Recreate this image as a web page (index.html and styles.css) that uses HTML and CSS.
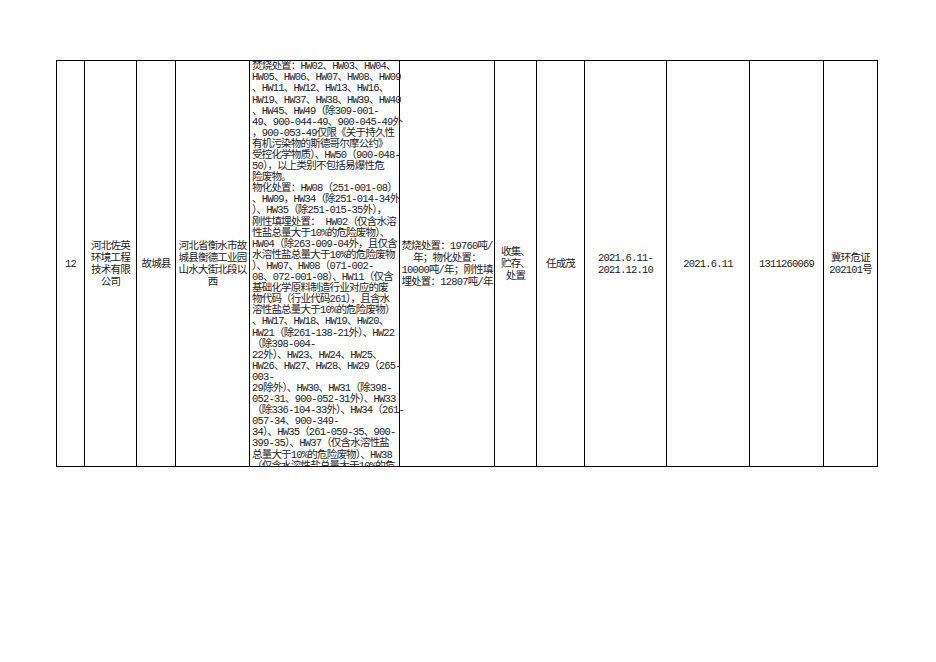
FILE: index.html
```html
<!DOCTYPE html>
<html lang="zh-CN">
<head>
<meta charset="utf-8">
<title>危险废物经营许可证</title>
<link rel="stylesheet" href="styles.css">
</head>
<body>
<div class="page">
<table class="sheet">
<colgroup>
<col class="c-no"><col class="c-name"><col class="c-county"><col class="c-addr"><col class="c-scope"><col class="c-scale"><col class="c-mode"><col class="c-person"><col class="c-valid"><col class="c-date"><col class="c-code"><col class="c-cert">
</colgroup>
<tr>
<td class="cell">12</td>
<td class="cell">河北佐英<br>环境工程<br>技术有限<br>公司</td>
<td class="cell">故城县</td>
<td class="cell">河北省衡水市故<br>城县衡德工业园<br>山水大街北段以<br>西</td>
<td class="scope"><div class="scope-box"><div class="scope-text">焚烧处置：HW02、HW03、HW04、<br>HW05、HW06、HW07、HW08、HW09<br>、HW11、HW12、HW13、HW16、<br>HW19、HW37、HW38、HW39、HW40<br>、HW45、HW49（除309-001-<br>49、900-044-49、900-045-49外<br>，900-053-49仅限《关于持久性<br>有机污染物的斯德哥尔摩公约》<br>受控化学物质）、HW50（900-048-<br>50），以上类别不包括易爆性危<br>险废物。<br>物化处置：HW08（251-001-08）<br>、HW09，HW34（除251-014-34外<br>）、HW35（除251-015-35外），<br>刚性填埋处置： HW02（仅含水溶<br>性盐总量大于10%的危险废物）、<br>HW04（除263-009-04外，且仅含<br>水溶性盐总量大于10%的危险废物<br>）、HW07、HW08（071-002-<br>08、072-001-08）、HW11（仅含<br>基础化学原料制造行业对应的废<br>物代码（行业代码261），且含水<br>溶性盐总量大于10%的危险废物）<br>、HW17、HW18、HW19、HW20、<br>HW21（除261-138-21外）、HW22<br>（除398-004-<br>22外）、HW23、HW24、HW25、<br>HW26、HW27、HW28、HW29（265-<br>003-<br>29除外）、HW30、HW31（除398-<br>052-31、900-052-31外）、HW33<br>（除336-104-33外）、HW34（261-<br>057-34、900-349-<br>34）、HW35（261-059-35、900-<br>399-35）、HW37（仅含水溶性盐<br>总量大于10%的危险废物）、HW38<br>（仅含水溶性盐总量大于10%的危</div></div></td>
<td class="cell">焚烧处置：19760吨/<br>年；物化处置：<br>10000吨/年；刚性填<br>埋处置：12807吨/年</td>
<td class="cell">收集、<br>贮存、<br>处置</td>
<td class="cell">任成茂</td>
<td class="cell">2021.6.11-<br>2021.12.10</td>
<td class="cell">2021.6.11</td>
<td class="cell">1311260069</td>
<td class="cell">冀环危证<br>202101号</td>
</tr>
</table>
</div>
</body>
</html>
```

FILE: styles.css
```css
html, body {
  margin: 0;
  padding: 0;
  background: #ffffff;
}

.page {
  padding: 60px 0 0 56px;
}

.sheet {
  border-collapse: collapse;
  table-layout: fixed;
  width: 822px;
  font-family: "Liberation Mono", "Noto Sans CJK SC", monospace;
  font-size: 10.5px;
  letter-spacing: -0.8px;
  color: #222222;
}

.sheet td {
  border: 1px solid #000;
  padding: 0;
  vertical-align: middle;
}

.c-no { width: 28px; }
.c-name { width: 52px; }
.c-county { width: 39px; }
.c-addr { width: 74px; }
.c-scope { width: 150px; }
.c-scale { width: 95px; }
.c-mode { width: 42px; }
.c-person { width: 48px; }
.c-valid { width: 82px; }
.c-date { width: 83px; }
.c-code { width: 74px; }
.c-cert { width: 54px; }

.cell {
  text-align: center;
  line-height: 12px;
  white-space: nowrap;
}

.scope-box {
  height: 405px;
  display: flex;
  flex-direction: column;
  justify-content: center;
  overflow-x: visible;
  overflow-y: clip;
}

.scope-text {
  flex: none;
  padding: 6px 0 0 2px;
  line-height: 11.1px;
  white-space: nowrap;
  text-align: left;
}
```
